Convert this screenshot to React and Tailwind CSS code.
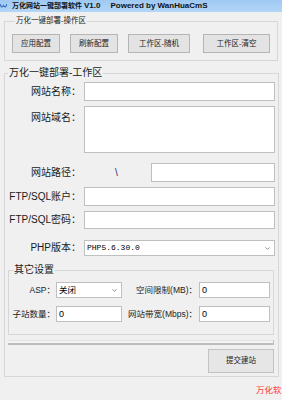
import { ChevronDown } from "lucide-react";

const FONT = { fontFamily: '"Liberation Sans", "Noto Sans CJK SC", sans-serif' };

function Field({ label, children, top = "items-center", labelPad = "" }) {
    return (
        <div className={`flex ${top}`}>
            <div className={`w-[76px] shrink-0 text-right text-[10px] leading-[12px] text-[#1a1a1a] ${labelPad}`}>
                {label}
            </div>
            <div className="ml-[3px] flex-1 flex">{children}</div>
        </div>
    );
}

function TextBox({ className = "", value = "" }) {
    return (
        <input
            type="text"
            defaultValue={value}
            className={`bg-white border border-[#bfbfbf] px-[2px] text-[9px] text-black outline-none ${className}`}
        />
    );
}

function Dropdown({ text, className = "", mono = false }) {
    return (
        <div
            className={`bg-white border border-[#bfbfbf] flex items-center justify-between pl-[2px] pr-[3px] text-black ${className}`}
        >
            <span
                className={mono ? "text-[8px]" : "text-[8.5px]"}
                style={mono ? { fontFamily: '"Liberation Mono", "Noto Sans CJK SC", monospace' } : undefined}
            >
                {text}
            </span>
            <ChevronDown size={7} strokeWidth={2} className="text-[#444]" />
        </div>
    );
}

export default function App() {
    return (
        <div className="w-[282px] h-[400px] bg-[#f0f0f0] overflow-hidden" style={FONT}>
            {/* Title */}
            <div className="h-[12px] bg-gradient-to-b from-[#9fc9f2] to-[#b3d6f7] flex items-center">
                <svg width="7" height="6" viewBox="0 0 7 6">
                    <path d="M0 1 Q1.5 6 3.5 2.5 Q5.5 6 7 1" fill="none" stroke="#3a6fc4" strokeWidth="1.3" />
                </svg>
                <span className="ml-[5px] text-[7px] font-bold text-[#111] whitespace-nowrap">万化网站一键部署软件</span>
                <span className="ml-[2px] text-[8px] font-bold text-[#111] whitespace-nowrap">V1.0</span>
                <span className="ml-[10px] text-[8px] font-bold text-[#111] whitespace-nowrap">Powered by WanHuaCmS</span>
            </div>

            {/* 操作区 */}
            <fieldset className="mt-[4px] ml-[4px] mr-[4px] border border-[#d7d7d7] pl-[7px] pt-[8px] pb-[7px]">
                <legend className="ml-[3px] px-[1px] text-[7.5px] leading-[10px] text-[#222]">万化一键部署-操作区</legend>
                <div className="flex">
                    <button className="w-[48px] h-[19px] bg-[#e3e3e3] border border-[#b5b5b5] text-[7.5px] text-[#222]">应用配置</button>
                    <button className="ml-[10px] w-[48px] h-[19px] bg-[#e3e3e3] border border-[#b5b5b5] text-[7.5px] text-[#222]">刷新配置</button>
                    <button className="ml-[10px] w-[62px] h-[19px] bg-[#e3e3e3] border border-[#b5b5b5] text-[7.5px] text-[#222]">工作区-随机</button>
                    <button className="ml-[13px] w-[67px] h-[19px] bg-[#e3e3e3] border border-[#b5b5b5] text-[7.5px] text-[#222]">工作区-清空</button>
                </div>
            </fieldset>

            {/* 工作区 */}
            <fieldset className="mt-[5px] ml-[4px] mr-[3px] border border-[#d7d7d7] pr-[3px] pb-[3px]">
                <legend className="ml-[3px] px-[1px] text-[10px] leading-[14px] text-[#222]">万化一键部署-工作区</legend>

                <div className="mt-[2px]">
                    <Field label="网站名称：">
                        <TextBox className="w-full h-[19px]" />
                    </Field>
                </div>
                <div className="mt-[5px]">
                    <Field label="网站域名：" top="items-start" labelPad="pt-[6px]">
                        <textarea className="w-full h-[47px] bg-white border border-[#bfbfbf] resize-none outline-none" />
                    </Field>
                </div>
                <div className="mt-[10px]">
                    <Field label="网站路径：">
                        <div className="flex-1 flex items-center">
                            <span className="ml-[31px] text-[10px] text-[#1f2f7a]">\</span>
                            <TextBox className="ml-auto w-[124px] h-[19px]" />
                        </div>
                    </Field>
                </div>
                <div className="mt-[5px]">
                    <Field label="FTP/SQL账户：">
                        <TextBox className="w-full h-[19px]" />
                    </Field>
                </div>
                <div className="mt-[5px]">
                    <Field label="FTP/SQL密码：">
                        <TextBox className="w-full h-[18px]" />
                    </Field>
                </div>
                <div className="mt-[11px]">
                    <Field label="PHP版本：">
                        <Dropdown text="PHP5.6.30.0" mono className="w-full h-[16px]" />
                    </Field>
                </div>

                {/* 其它设置 */}
                <fieldset className="mt-[7px] ml-[3px] mr-[1px] border border-[#d7d7d7] pt-[5px] pb-[12px]">
                    <legend className="ml-[4px] px-[1px] text-[10px] leading-[14px] text-[#222]">其它设置</legend>
                    <div className="flex items-center h-[16px]">
                        <div className="w-[46px] text-right text-[8.5px] text-[#1a1a1a] whitespace-nowrap">ASP：</div>
                        <Dropdown text="关闭" className="ml-[1px] w-[66px] h-[16px]" />
                        <div className="w-[75px] text-right text-[8.5px] text-[#1a1a1a] whitespace-nowrap">空间限制(MB)：</div>
                        <TextBox value="0" className="ml-[2px] w-[71px] h-[16px]" />
                    </div>
                    <div className="mt-[8px] flex items-center h-[16px]">
                        <div className="w-[46px] text-right text-[8.5px] text-[#1a1a1a] whitespace-nowrap">子站数量：</div>
                        <TextBox value="0" className="ml-[1px] w-[66px] h-[16px]" />
                        <div className="w-[75px] text-right text-[8.5px] text-[#1a1a1a] whitespace-nowrap">网站带宽(Mbps)：</div>
                        <TextBox value="0" className="ml-[2px] w-[71px] h-[16px]" />
                    </div>
                </fieldset>

                {/* 进度条 */}
                <div className="mt-[5px] ml-[3px] mr-[1px] h-[5px] bg-[#f3f3f3] border-t border-[#e2e2e2] border-b-2 border-b-[#bdbdbd] border-r border-r-[#bdbdbd]" />

                <div className="mt-[4px] flex justify-end mr-[1px]">
                    <button className="w-[66px] h-[24px] bg-[#e6e6e6] border border-[#c2c2c2] text-[7.5px] text-[#222]">提交建站</button>
                </div>
            </fieldset>

            <div className="mt-[8px] pl-[256px] whitespace-nowrap text-[8.5px] leading-[10px] text-[#ff3b3b]">万化软</div>
        </div>
    );
}
